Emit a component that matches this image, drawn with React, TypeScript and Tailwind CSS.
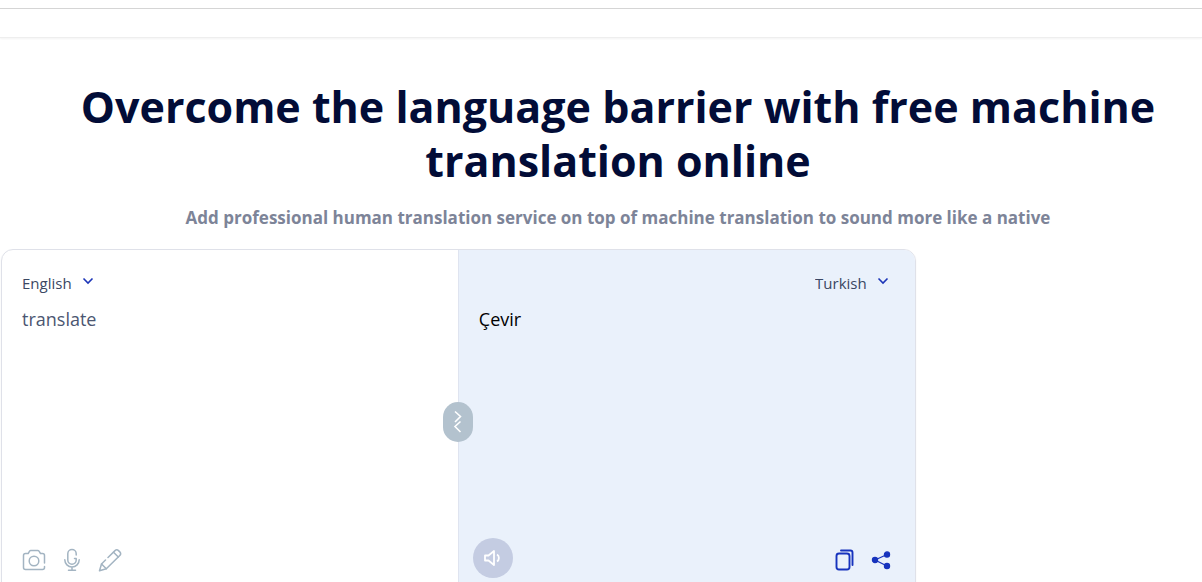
import React, { useState } from "react";

const LANGUAGES = ["English", "Turkish", "German", "French", "Spanish"];

function LanguageSelect({ label, initial }: { label: string; initial: string }) {
  const [language, setLanguage] = useState(initial);

  return (
    <div className="flex items-center gap-2.5">
      <select
        aria-label={label}
        value={language}
        onChange={(e) => setLanguage(e.target.value)}
        className="appearance-none field-sizing-content bg-transparent text-[15px] leading-6 text-[#3b4763] outline-none"
      >
        {LANGUAGES.map((name) => (
          <option key={name} value={name}>
            {name}
          </option>
        ))}
      </select>
      <svg className="mb-1 h-2 w-3" viewBox="0 0 12 8" fill="none" stroke="#1c35b8" strokeWidth="1.6" aria-hidden="true">
        <path d="M1.5 1.5 6 6l4.5-4.5" />
      </svg>
    </div>
  );
}

function CameraIcon() {
  return (
    <svg className="h-6 w-6" viewBox="0 0 24 24" fill="none" stroke="#a3b4c2" strokeWidth="1.5" strokeLinecap="round" strokeLinejoin="round">
      <path d="M22.5 15V7.5a2 2 0 0 0-2-2h-2L17 3.2a1.5 1.5 0 0 0-1.200-.7H8.800a1.5 1.5 0 0 0-1.200.7L6.200 5.500H3.500a2 2 0 0 0-2 2v12a2 2 0 0 0 2 2h17a2 2 0 0 0 2-2v-1" />
      <circle cx="12" cy="13" r="4.8" />
    </svg>
  );
}

function MicIcon() {
  return (
    <svg className="h-6 w-6" viewBox="0 0 24 24" fill="none" stroke="#a3b4c2" strokeWidth="1.5" strokeLinecap="round" strokeLinejoin="round">
      <path d="M16.2 7V5.700a4.200 4.200 0 0 0-8.400 0V12a4.200 4.200 0 0 0 8.400 0v-1.500h-1.700" />
      <path d="M4.8 11.800a7.200 7.200 0 0 0 14.400 0M12 19v3.300M8.500 22.300h7" />
    </svg>
  );
}

function PencilIcon() {
  return (
    <svg className="h-6 w-6" viewBox="0 0 24 24" fill="none" stroke="#a3b4c2" strokeWidth="1.5" strokeLinecap="round" strokeLinejoin="round">
      <path d="M10 9.5 17 2.600a2.500 2.500 0 0 1 3.500 0l1.300 1.300a2.500 2.500 0 0 1 0 3.500L8.300 20.800 1.500 22.800 3.500 16 7.500 12" />
      <path d="m15.500 4.200 4.800 4.800M3.500 16l4.800 4.800" />
    </svg>
  );
}

function SpeakerIcon() {
  return (
    <svg className="h-5 w-5" viewBox="0 0 20 20" fill="none" stroke="#ffffff" strokeWidth="1.8" strokeLinejoin="round">
      <path d="M2 7.500h3.500L11 3v14l-5.500-4.500H2z" />
      <path d="M14 6.500c2.500 1.500 2.500 5.500 0 7" />
    </svg>
  );
}

function CopyIcon() {
  return (
    <svg className="h-6 w-6" viewBox="0 0 24 24" fill="none" stroke="#1733bd" strokeWidth="1.9" strokeLinecap="round" strokeLinejoin="round">
      <rect x="3.5" y="5.500" width="13" height="16" rx="2.5" />
      <path d="M8 2.500h9.500a2 2 0 0 1 2 2V17" />
    </svg>
  );
}

function ShareIcon() {
  return (
    <svg className="h-6 w-6" viewBox="0 0 24 24" fill="#1733bd" stroke="#1733bd" strokeWidth="1.2">
      <path d="M18 6.500 6 12l12 6" fill="none" />
      <circle cx="6" cy="12" r="2.6" />
      <circle cx="18" cy="6.500" r="2.6" />
      <circle cx="18" cy="18" r="2.6" />
    </svg>
  );
}

export default function App() {
  const [text, setText] = useState("translate");

  return (
    <div className="flex h-screen flex-col overflow-hidden bg-white font-['Open_Sans','Noto_Sans',sans-serif]">
      <header className="mt-2 h-[30px] shrink-0 border-t border-b border-t-[#d5d5d5] border-b-[#eeeeee] shadow-xs" />

      <main className="flex flex-1 flex-col">
        <div className="pt-[42px] pr-2.5 pl-11 text-center">
          <h1 className="text-[43px] leading-[54px] font-bold text-[#020c37]">
            Overcome the language barrier with free machine translation online
          </h1>
          <p className="mt-4 text-[17px] leading-7 font-bold text-[#7d8498]">
            Add professional human translation service on top of machine translation to sound more like a native
          </p>
        </div>

        <section className="relative mt-[17px] -mb-3 ml-px flex w-[76.1%] flex-1 rounded-xl border border-[#dfe1e9] shadow-xs">
          <div className="flex flex-1 flex-col px-5 py-[21px]">
            <div className="flex">
              <LanguageSelect label="Source language" initial="English" />
            </div>
            <textarea
              aria-label="Text to translate"
              value={text}
              onChange={(e) => setText(e.target.value)}
              className="mt-2.5 w-full flex-1 resize-none bg-transparent text-[18px] leading-7 text-[#4b5671] outline-none"
            />
            <div className="flex gap-3.5">
              <button type="button" aria-label="Translate from image">
                <CameraIcon />
              </button>
              <button type="button" aria-label="Voice input">
                <MicIcon />
              </button>
              <button type="button" aria-label="Handwriting">
                <PencilIcon />
              </button>
            </div>
          </div>

          <div className="flex flex-1 flex-col rounded-r-[11px] border-l border-[#dfe4f0] bg-[#eaf1fb] px-5 py-[21px]">
            <div className="flex justify-end pr-1.5">
              <LanguageSelect label="Target language" initial="Turkish" />
            </div>
            <p className="mt-2.5 flex-1 text-[18px] leading-7 text-black">Çevir</p>
            <div className="-ml-1.5 flex items-end justify-between pr-0.5">
              <button
                type="button"
                aria-label="Listen"
                className="relative -mt-3 -mb-1.5 flex h-10 w-10 items-center justify-center rounded-full bg-[#c4cce2]"
              >
                <SpeakerIcon />
                <span className="absolute -bottom-3 left-3.5 h-2 w-2 rounded-full bg-[#4fd06a]" />
              </button>
              <div className="flex gap-3">
                <button type="button" aria-label="Copy translation">
                  <CopyIcon />
                </button>
                <button type="button" aria-label="Share translation">
                  <ShareIcon />
                </button>
              </div>
            </div>
          </div>

          <button
            type="button"
            aria-label="Swap languages"
            className="absolute top-1/2 left-1/2 flex h-10 w-[30px] -translate-x-1/2 -translate-y-1/2 items-center justify-center rounded-[15px] bg-[#b3c2ce]"
          >
            <svg className="h-6 w-3" viewBox="0 0 12 24" fill="none" stroke="#ffffff" strokeWidth="1.6">
              <path d="m3 1.500 5.500 5L3 12M8.500 11.500l-5.500 5 5.500 5.500" />
            </svg>
          </button>
        </section>
      </main>
    </div>
  );
}
